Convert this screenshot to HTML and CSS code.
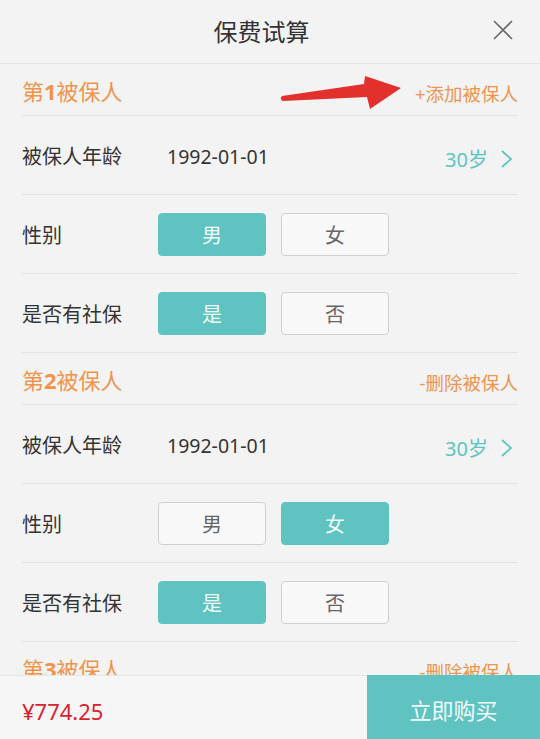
FILE: index.html
```html
<!DOCTYPE html>
<html lang="zh-CN">
<head>
<meta charset="utf-8">
<title>保费试算</title>
<link rel="stylesheet" href="styles.css">
</head>
<body>
<div class="page">
  <header class="topbar">
    <h1 class="title">保费试算</h1>
    <span class="close">
      <svg width="20" height="20" viewBox="0 0 20 20"><path d="M1 1L19 19M19 1L1 19" stroke="#6a6a6a" stroke-width="1.6" fill="none"/></svg>
    </span>
  </header>

  <section class="insured">
    <div class="sec-head">
      <span class="sec-title">第<b>1</b>被保人</span>
      <span class="sec-action">+添加被保人</span>
      <svg class="arrow" width="130" height="40" viewBox="0 0 130 40">
        <path d="M4 23 L86 11 L87 3 L123 15 L92 36 L89 24 L5 28 Q1 26 4 23 Z" fill="#e3302c"/>
      </svg>
    </div>
    <div class="row">
      <span class="label">被保人年龄</span>
      <span class="value">1992-01-01</span>
      <span class="age">30岁<svg class="chev" width="14" height="18" viewBox="0 0 14 18"><path d="M2 1L11 9L2 17" stroke="#5ec3c1" stroke-width="1.8" fill="none"/></svg></span>
    </div>
    <div class="row">
      <span class="label">性别</span>
      <div class="opts"><span class="opt on">男</span><span class="opt">女</span></div>
    </div>
    <div class="row">
      <span class="label">是否有社保</span>
      <div class="opts"><span class="opt on">是</span><span class="opt">否</span></div>
    </div>
  </section>

  <section class="insured">
    <div class="sec-head">
      <span class="sec-title">第<b>2</b>被保人</span>
      <span class="sec-action">-删除被保人</span>
    </div>
    <div class="row">
      <span class="label">被保人年龄</span>
      <span class="value">1992-01-01</span>
      <span class="age">30岁<svg class="chev" width="14" height="18" viewBox="0 0 14 18"><path d="M2 1L11 9L2 17" stroke="#5ec3c1" stroke-width="1.8" fill="none"/></svg></span>
    </div>
    <div class="row">
      <span class="label">性别</span>
      <div class="opts"><span class="opt">男</span><span class="opt on">女</span></div>
    </div>
    <div class="row">
      <span class="label">是否有社保</span>
      <div class="opts"><span class="opt on">是</span><span class="opt">否</span></div>
    </div>
  </section>

  <section class="insured">
    <div class="sec-head">
      <span class="sec-title">第<b>3</b>被保人</span>
      <span class="sec-action">-删除被保人</span>
    </div>
  </section>

  <footer class="bottombar">
    <span class="price">¥774.25</span>
    <span class="buy">立即购买</span>
  </footer>
</div>
</body>
</html>
```

FILE: styles.css
```css
* { box-sizing: border-box; }
html, body {
  margin: 0;
  padding: 0;
  overflow: hidden;
}
body {
  background: #f3f3f3;
  font-family: "Noto Sans", "Noto Sans CJK SC", sans-serif;
  color: #333;
}
.page {
  width: 540px;
  height: 739px;
  position: relative;
}
.topbar {
  height: 64px;
  border-bottom: 1px solid #e4e4e4;
  display: flex;
  align-items: center;
  justify-content: center;
  position: relative;
  padding-right: 17px;
}
.title {
  margin: 0;
  font-size: 24px;
  font-weight: normal;
  color: #333;
  line-height: 1;
  padding-top: 1px;
}
.close {
  position: absolute;
  right: 27px;
  top: 20px;
  width: 20px;
  height: 20px;
  display: flex;
}
.insured {
  padding: 0 22px;
}
.sec-head {
  height: 52px;
  border-bottom: 1px solid #e3e3e3;
  display: flex;
  align-items: center;
  justify-content: space-between;
  position: relative;
  padding-top: 3px;
}
.sec-title {
  font-size: 22px;
  color: #f0944d;
  line-height: 1;
}
.sec-title b {
  font-weight: bold;
}
.sec-action {
  font-size: 18.5px;
  color: #ee9450;
  line-height: 1;
  padding-top: 7px;
}
.arrow {
  position: absolute;
  left: 256px;
  top: 9px;
}
.row {
  height: 79px;
  border-bottom: 1px solid #e3e3e3;
  display: flex;
  align-items: center;
  padding-top: 3px;
}
.label {
  width: 136px;
  font-size: 20px;
  color: #333;
  line-height: 1;
}
.value {
  padding-left: 9px;
  font-size: 19.5px;
  color: #333;
  line-height: 1;
}
.age {
  margin-left: auto;
  display: flex;
  align-items: center;
  font-size: 20px;
  color: #5ec3c1;
  line-height: 1;
  padding-top: 6px;
  margin-right: 4px;
}
.chev {
  margin-left: 12px;
  margin-top: -2px;
}
.opts {
  display: flex;
  gap: 15px;
  margin-top: -3px;
}
.opt {
  width: 108px;
  height: 43px;
  border: 1px solid #d0d0d0;
  border-radius: 4px;
  background: #f8f8f8;
  color: #666;
  font-size: 20px;
  display: flex;
  align-items: center;
  justify-content: center;
}
.opt.on {
  background: #5ec3c1;
  border-color: #5ec3c1;
  color: #f4fbfb;
}
.bottombar {
  position: absolute;
  left: 0;
  right: 0;
  bottom: 0;
  height: 64px;
  background: #f6f6f6;
  border-top: 1px solid #e6e6e6;
  display: flex;
  align-items: stretch;
}
.price {
  flex: 1;
  display: flex;
  align-items: center;
  padding-left: 22px;
  padding-top: 6px;
  font-size: 22px;
  color: #d8222e;
}
.buy {
  width: 173px;
  margin-top: -1px;
  padding-top: 4px;
  background: #5ec3c1;
  color: #f2fafa;
  font-size: 22px;
  display: flex;
  align-items: center;
  justify-content: center;
}
```
